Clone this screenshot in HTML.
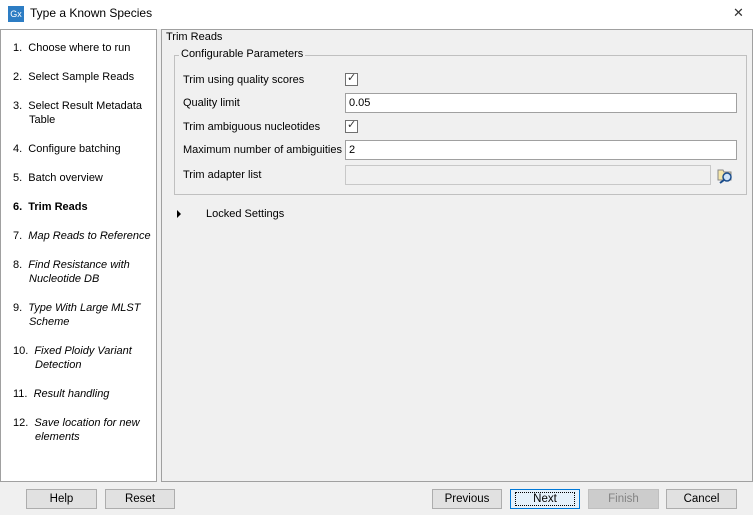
<!DOCTYPE html>
<html><head><style>
body{margin:0;width:753px;height:515px;background:#f0f0f0;font-family:"Liberation Sans",sans-serif;font-size:11px;color:#000;position:relative;overflow:hidden}
.a{position:absolute}
.title{left:0;top:0;width:753px;height:29px;background:#fff}
.left{left:0;top:29px;width:157px;height:453px;background:#fff;border:1px solid #a0a0a0;box-sizing:border-box}
.right{left:161px;top:29px;width:592px;height:453px;border:1px solid #a0a0a0;box-sizing:border-box;background:#f0f0f0}
.it{position:absolute;line-height:14px}
.btn{position:absolute;top:489px;height:20px;border:1px solid #adadad;background:#e1e1e1;box-sizing:border-box;text-align:center;line-height:18px;font-size:11.5px}
.inp{position:absolute;left:345px;width:392px;height:20px;background:#fff;border:1px solid #a0a0a0;box-sizing:border-box;padding-left:3px;line-height:18px}
.cb{position:absolute;left:345px;width:13px;height:13px;border:1px solid #707070;background:#fff;box-sizing:border-box}
.lbl{position:absolute;left:183px}
</style></head><body>
<div class="a title"></div>
<div class="a" style="left:8px;top:6px;width:16px;height:16px;background:#2d7dc4;color:#fff;font-size:9px;line-height:16px;text-align:center">Gx</div>
<div class="a" style="left:30px;top:6px;font-size:12px">Type a Known Species</div>
<div class="a" style="left:733px;top:5px;font-size:13px;color:#333">✕</div>
<div class="a left">
<div class="it" style="left:12px;top:11px">1.&nbsp; Choose where to run</div>
<div class="it" style="left:12px;top:40px">2.&nbsp; Select Sample Reads</div>
<div class="it" style="left:12px;top:69px">3.&nbsp; Select Result Metadata<br><span style="padding-left:16px">Table</span></div>
<div class="it" style="left:12px;top:112px">4.&nbsp; Configure batching</div>
<div class="it" style="left:12px;top:141px">5.&nbsp; Batch overview</div>
<div class="it" style="left:12px;top:170px;font-weight:bold">6.&nbsp; Trim Reads</div>
<div class="it" style="left:12px;top:199px;font-style:italic"><span style="font-style:normal">7.</span>&nbsp; Map Reads to Reference</div>
<div class="it" style="left:12px;top:228px;font-style:italic"><span style="font-style:normal">8.</span>&nbsp; Find Resistance with<br><span style="padding-left:16px">Nucleotide DB</span></div>
<div class="it" style="left:12px;top:271px;font-style:italic"><span style="font-style:normal">9.</span>&nbsp; Type With Large MLST<br><span style="padding-left:16px">Scheme</span></div>
<div class="it" style="left:12px;top:314px;font-style:italic"><span style="font-style:normal">10.</span>&nbsp; Fixed Ploidy Variant<br><span style="padding-left:22px">Detection</span></div>
<div class="it" style="left:12px;top:357px;font-style:italic"><span style="font-style:normal">11.</span>&nbsp; Result handling</div>
<div class="it" style="left:12px;top:386px;font-style:italic"><span style="font-style:normal">12.</span>&nbsp; Save location for new<br><span style="padding-left:22px">elements</span></div>
</div>
<div class="a right"></div>
<div class="a" style="left:166px;top:31px">Trim Reads</div>
<div class="a" style="left:174px;top:55px;width:573px;height:140px;border:1px solid #c0c0c0;box-sizing:border-box"></div>
<div class="a" style="left:179px;top:48px;background:#f0f0f0;padding:0 2px">Configurable Parameters</div>
<div class="lbl" style="top:74px">Trim using quality scores</div>
<div class="cb" style="top:73px"><span style="position:absolute;left:1px;top:-3px;font-size:11px;color:#333">✓</span></div>
<div class="lbl" style="top:97px">Quality limit</div>
<div class="inp" style="top:93px">0.05</div>
<div class="lbl" style="top:121px">Trim ambiguous nucleotides</div>
<div class="cb" style="top:120px"><span style="position:absolute;left:1px;top:-3px;font-size:11px;color:#333">✓</span></div>
<div class="lbl" style="top:144px">Maximum number of ambiguities</div>
<div class="inp" style="top:140px">2</div>
<div class="lbl" style="top:169px">Trim adapter list</div>
<div class="inp" style="top:165px;width:366px;background:#f0f0f0;border-color:#c8c8c8"></div>
<svg class="a" style="left:716px;top:166px" width="18" height="18"><path d="M2 4h5l1 2h7v8H2z" fill="#f5e6a8" stroke="#888"/><circle cx="11" cy="11" r="4" fill="#cfe4f7" stroke="#1a4d8c" stroke-width="1.5"/><path d="M8 14l-4 3" stroke="#1a4d8c" stroke-width="2"/></svg>
<div class="a" style="left:177px;top:210px;width:0;height:0;border-left:4px solid #000;border-top:4px solid transparent;border-bottom:4px solid transparent"></div>
<div class="a" style="left:206px;top:208px">Locked Settings</div>
<div class="btn" style="left:26px;width:71px">Help</div>
<div class="btn" style="left:105px;width:70px">Reset</div>
<div class="btn" style="left:432px;width:70px">Previous</div>
<div class="btn" style="left:510px;width:70px;border-color:#0078d7;background:#e5f1fb"><span style="outline:1px dotted #000;padding:0 17px">Next</span></div>
<div class="btn" style="left:588px;width:71px;border-color:#bfbfbf;background:#cccccc;color:#838383">Finish</div>
<div class="btn" style="left:666px;width:71px">Cancel</div>
</body></html>
